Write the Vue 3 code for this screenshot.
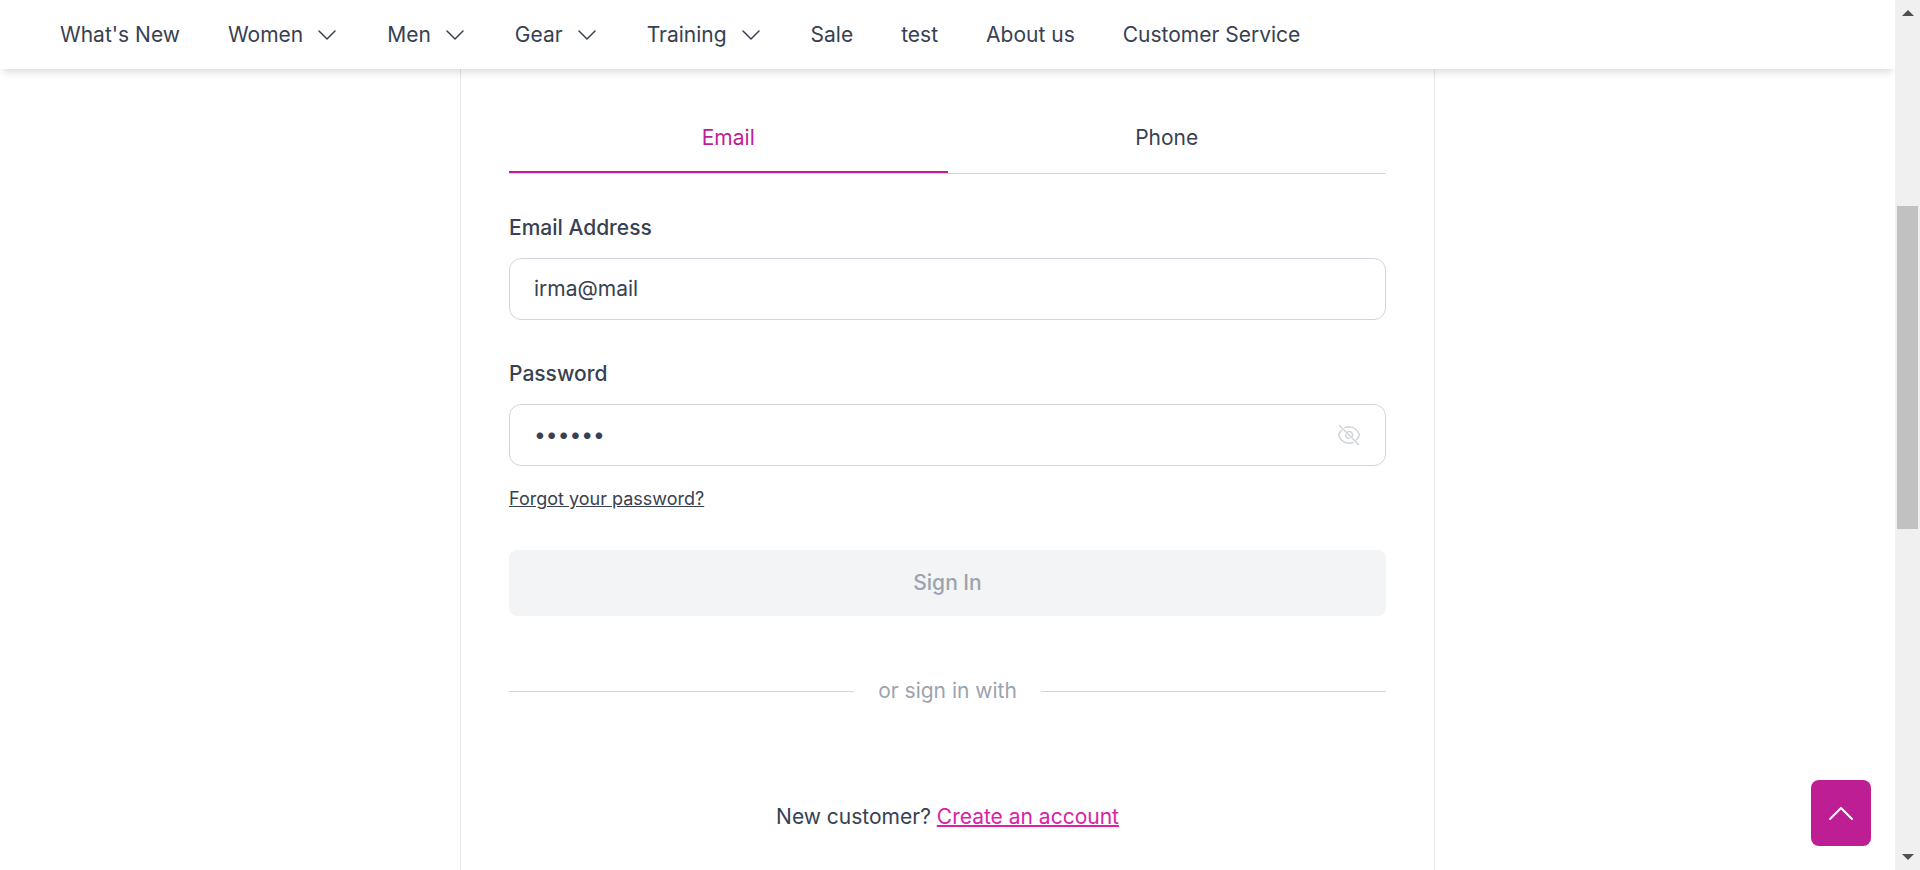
<script setup>
import { ref } from 'vue'

const navItems = [
  { label: "What's New", menu: false },
  { label: 'Women', menu: true },
  { label: 'Men', menu: true },
  { label: 'Gear', menu: true },
  { label: 'Training', menu: true },
  { label: 'Sale', menu: false },
  { label: 'test', menu: false },
  { label: 'About us', menu: false },
  { label: 'Customer Service', menu: false },
]
const tabs = ['Email', 'Phone']
const activeTab = ref('Email')
const email = ref('irma@mail')
const password = ref('secret')
const showPassword = ref(false)
</script>

<template>
  <div class="shell">
    <div class="page">
      <header class="header">
        <nav class="nav">
          <a v-for="item in navItems" :key="item.label" href="#" class="nav-link">
            {{ item.label }}
            <svg v-if="item.menu" class="chevron" viewBox="0 0 18 12" aria-hidden="true">
              <path d="M1 2l8 8 8-8" />
            </svg>
          </a>
        </nav>
      </header>

      <main class="main">
        <section class="card">
          <div class="tabs" role="tablist">
            <button
              v-for="tab in tabs"
              :key="tab"
              type="button"
              role="tab"
              class="tab"
              :class="{ active: tab === activeTab }"
              :aria-selected="tab === activeTab"
              @click="activeTab = tab"
            >{{ tab }}</button>
          </div>

          <form class="form" @submit.prevent>
            <label class="label" for="email">Email Address</label>
            <div class="field">
              <input id="email" v-model="email" class="input" type="text" autocomplete="off" />
            </div>

            <label class="label" for="password">Password</label>
            <div class="field">
              <input
                id="password"
                v-model="password"
                class="input"
                :type="showPassword ? 'text' : 'password'"
                autocomplete="off"
              />
              <button class="eye" type="button" aria-label="Show password" @click="showPassword = !showPassword">
                <svg viewBox="0 0 24 24" aria-hidden="true">
                  <path d="M2.500 2.500l19 19" />
                  <path d="M8 4.500A11 8.500 0 0 1 12 3.800c5 0 9 3.500 10.500 8.200-.6 1.900-1.700 3.500-3.200 4.800" />
                  <path d="M4.600 7.300A10.500 10.500 0 0 0 1.500 12c1.500 4.700 5.500 8.200 10.500 8.200 1.400 0 2.700-.2 3.900-.7" />
                  <path d="M11 8.800a3.400 3.400 0 0 1 4.400 4.400M8.700 11.500a3.400 3.400 0 0 0 3.300 3.900" />
                </svg>
              </button>
            </div>

            <a class="forgot" href="#">Forgot your password?</a>
            <button class="submit" type="submit" disabled>Sign In</button>
          </form>

          <div class="divider"><span>or sign in with</span></div>

          <p class="signup">New customer? <a href="#">Create an account</a></p>
        </section>
      </main>

      <button class="to-top" type="button" aria-label="Back to top">
        <svg viewBox="0 0 26 16" aria-hidden="true"><path d="M2 14L13 3l11 11" /></svg>
      </button>
    </div>

    <div class="scrollbar" aria-hidden="true">
      <svg class="arrow" viewBox="0 0 12 6"><path d="M0 6L6 0l6 6z" /></svg>
      <div class="track"><div class="thumb"></div></div>
      <svg class="arrow" viewBox="0 0 12 6"><path d="M0 0l6 6 6-6z" /></svg>
    </div>
  </div>
</template>

<style>
body {
  margin: 0;
  background: #fff;
}
</style>

<style scoped>
.shell {
  display: flex;
  height: 100vh;
  overflow: hidden;
  font-family: Inter, "Liberation Sans", sans-serif;
  font-size: 21px;
  line-height: 30px;
  color: #374151;
}
.shell *,
.shell *::before,
.shell *::after {
  box-sizing: border-box;
}
button,
input {
  font: inherit;
  color: inherit;
}
.page {
  position: relative;
  flex: 1;
  display: flex;
  flex-direction: column;
  min-width: 0;
  overflow: hidden;
}
.header {
  position: relative;
  z-index: 1;
  padding: 20px 60px 19px;
  background: #fff;
  box-shadow: 0 6px 8px -3px rgba(0, 0, 0, 0.15);
}
.nav {
  display: flex;
  gap: 48px;
}
.nav-link {
  display: flex;
  align-items: center;
  gap: 15px;
  color: inherit;
  text-decoration: none;
  white-space: nowrap;
}
.chevron {
  width: 18px;
  height: 12px;
  margin-right: 3px;
  fill: none;
  stroke: currentColor;
  stroke-width: 1.5;
  stroke-linecap: round;
  stroke-linejoin: round;
}
.main {
  flex: 1;
  display: flex;
  justify-content: center;
}
.card {
  flex: 0 1 975px;
  padding: 32px 48px;
  border: solid #e5e7eb;
  border-width: 0 1px;
}
.tabs {
  display: flex;
  border-bottom: 1px solid #d1d5db;
}
.tab {
  flex: 1;
  padding: 22px 0 18px;
  border: 0;
  border-bottom: 2px solid transparent;
  background: none;
}
.tab.active {
  border-color: #be1e93;
  color: #be1e93;
}
.form {
  display: flex;
  flex-direction: column;
}
.label {
  margin-top: 39px;
  margin-bottom: 15px;
  font-weight: 500;
}
.field {
  display: flex;
  align-items: center;
  height: 62px;
  padding: 0 24px;
  border: 1px solid #d1d5db;
  border-radius: 12px;
}
.input {
  flex: 1;
  min-width: 0;
  padding: 0;
  border: 0;
  outline: 0;
  background: none;
}
.eye {
  display: flex;
  padding: 0;
  border: 0;
  background: none;
}
.eye svg {
  width: 24px;
  height: 24px;
  fill: none;
  stroke: #d1d5db;
  stroke-width: 1.6;
  stroke-linecap: round;
}
.forgot {
  align-self: flex-start;
  margin-top: 18px;
  font-size: 18px;
  color: inherit;
}
.submit {
  height: 66px;
  margin-top: 36px;
  border: 0;
  border-radius: 8px;
  background: #f3f4f6;
  color: #9ca3af;
  font-weight: 500;
}
.divider {
  display: flex;
  align-items: center;
  gap: 24px;
  margin-top: 60px;
  color: #9ca3af;
}
.divider::before,
.divider::after {
  content: "";
  flex: 1;
  height: 1px;
  background: #d1d5db;
}
.signup {
  margin: 96px 0 0;
  text-align: center;
}
.signup a {
  color: #d922a9;
  text-decoration-thickness: 2px;
}
.to-top {
  position: absolute;
  right: 24px;
  bottom: 24px;
  display: flex;
  align-items: center;
  justify-content: center;
  width: 60px;
  height: 66px;
  padding: 0;
  border: 0;
  border-radius: 8px;
  background: #be1e93;
}
.to-top svg {
  width: 26px;
  height: 16px;
  fill: none;
  stroke: #fff;
  stroke-width: 2;
  stroke-linecap: round;
  stroke-linejoin: round;
}
.scrollbar {
  display: flex;
  flex-direction: column;
  align-items: center;
  width: 25px;
  padding: 10px 2px;
  background: #f0f0f0;
}
.arrow {
  flex: none;
  width: 12px;
  height: 6px;
  fill: #505050;
}
.track {
  flex: 1;
  align-self: stretch;
  margin: 10px 0;
}
.thumb {
  height: 323px;
  margin-top: 180px;
  background: #c1c1c1;
}
</style>
